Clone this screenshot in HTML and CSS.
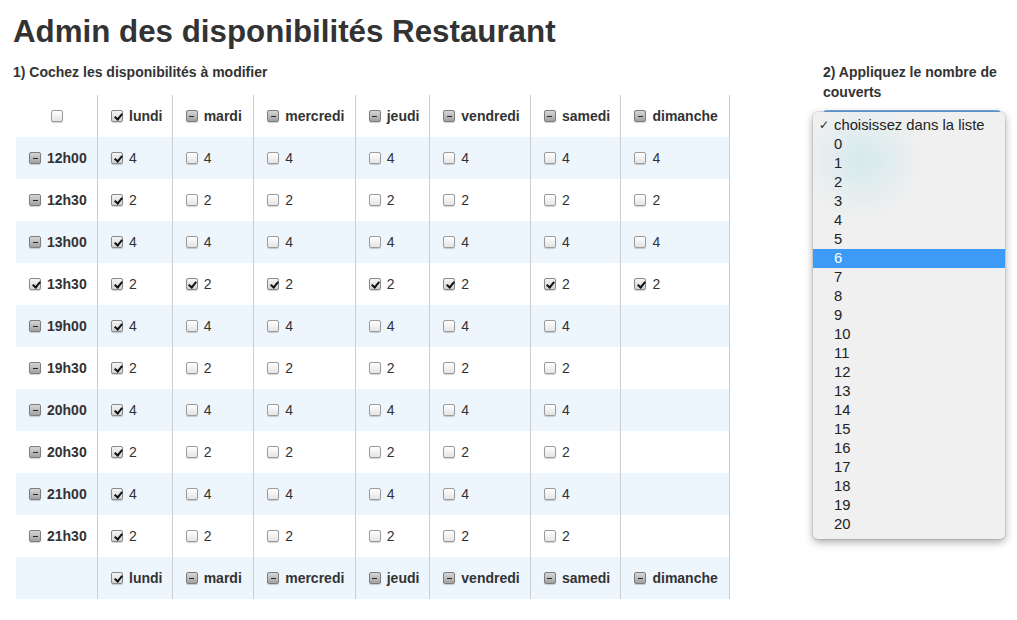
FILE: index.html
```html
<!DOCTYPE html>
<html lang="fr">
<head>
<meta charset="utf-8">
<title>Admin des disponibilités Restaurant</title>
<link rel="stylesheet" href="styles.css">
</head>
<body>
<div class="page">
  <h1 class="title">Admin des disponibilités Restaurant</h1>
  <div class="layout">
    <div class="left">
      <p class="step">1) Cochez les disponibilités à modifier</p>
      <table class="grid">
        <thead>
          <tr>
            <th class="corner"><span class="cb"></span></th>
            <th><span class="cb on"></span>lundi</th>
            <th><span class="cb mixed"></span>mardi</th>
            <th><span class="cb mixed"></span>mercredi</th>
            <th><span class="cb mixed"></span>jeudi</th>
            <th><span class="cb mixed"></span>vendredi</th>
            <th><span class="cb mixed"></span>samedi</th>
            <th><span class="cb mixed"></span>dimanche</th>
          </tr>
        </thead>
        <tbody>
          <tr class="alt">
            <th class="hour"><span class="cb mixed"></span>12h00</th>
            <td><span class="cb on"></span>4</td><td><span class="cb"></span>4</td><td><span class="cb"></span>4</td><td><span class="cb"></span>4</td><td><span class="cb"></span>4</td><td><span class="cb"></span>4</td><td><span class="cb"></span>4</td>
          </tr>
          <tr>
            <th class="hour"><span class="cb mixed"></span>12h30</th>
            <td><span class="cb on"></span>2</td><td><span class="cb"></span>2</td><td><span class="cb"></span>2</td><td><span class="cb"></span>2</td><td><span class="cb"></span>2</td><td><span class="cb"></span>2</td><td><span class="cb"></span>2</td>
          </tr>
          <tr class="alt">
            <th class="hour"><span class="cb mixed"></span>13h00</th>
            <td><span class="cb on"></span>4</td><td><span class="cb"></span>4</td><td><span class="cb"></span>4</td><td><span class="cb"></span>4</td><td><span class="cb"></span>4</td><td><span class="cb"></span>4</td><td><span class="cb"></span>4</td>
          </tr>
          <tr>
            <th class="hour"><span class="cb on"></span>13h30</th>
            <td><span class="cb on"></span>2</td><td><span class="cb on"></span>2</td><td><span class="cb on"></span>2</td><td><span class="cb on"></span>2</td><td><span class="cb on"></span>2</td><td><span class="cb on"></span>2</td><td><span class="cb on"></span>2</td>
          </tr>
          <tr class="alt">
            <th class="hour"><span class="cb mixed"></span>19h00</th>
            <td><span class="cb on"></span>4</td><td><span class="cb"></span>4</td><td><span class="cb"></span>4</td><td><span class="cb"></span>4</td><td><span class="cb"></span>4</td><td><span class="cb"></span>4</td><td></td>
          </tr>
          <tr>
            <th class="hour"><span class="cb mixed"></span>19h30</th>
            <td><span class="cb on"></span>2</td><td><span class="cb"></span>2</td><td><span class="cb"></span>2</td><td><span class="cb"></span>2</td><td><span class="cb"></span>2</td><td><span class="cb"></span>2</td><td></td>
          </tr>
          <tr class="alt">
            <th class="hour"><span class="cb mixed"></span>20h00</th>
            <td><span class="cb on"></span>4</td><td><span class="cb"></span>4</td><td><span class="cb"></span>4</td><td><span class="cb"></span>4</td><td><span class="cb"></span>4</td><td><span class="cb"></span>4</td><td></td>
          </tr>
          <tr>
            <th class="hour"><span class="cb mixed"></span>20h30</th>
            <td><span class="cb on"></span>2</td><td><span class="cb"></span>2</td><td><span class="cb"></span>2</td><td><span class="cb"></span>2</td><td><span class="cb"></span>2</td><td><span class="cb"></span>2</td><td></td>
          </tr>
          <tr class="alt">
            <th class="hour"><span class="cb mixed"></span>21h00</th>
            <td><span class="cb on"></span>4</td><td><span class="cb"></span>4</td><td><span class="cb"></span>4</td><td><span class="cb"></span>4</td><td><span class="cb"></span>4</td><td><span class="cb"></span>4</td><td></td>
          </tr>
          <tr>
            <th class="hour"><span class="cb mixed"></span>21h30</th>
            <td><span class="cb on"></span>2</td><td><span class="cb"></span>2</td><td><span class="cb"></span>2</td><td><span class="cb"></span>2</td><td><span class="cb"></span>2</td><td><span class="cb"></span>2</td><td></td>
          </tr>
        </tbody>
        <tfoot>
          <tr class="alt">
            <th class="corner"></th>
            <th><span class="cb on"></span>lundi</th>
            <th><span class="cb mixed"></span>mardi</th>
            <th><span class="cb mixed"></span>mercredi</th>
            <th><span class="cb mixed"></span>jeudi</th>
            <th><span class="cb mixed"></span>vendredi</th>
            <th><span class="cb mixed"></span>samedi</th>
            <th><span class="cb mixed"></span>dimanche</th>
          </tr>
        </tfoot>
      </table>
    </div>
    <div class="right">
      <p class="step">2) Appliquez le nombre de couverts</p>
      <div class="select-wrap">
        <div class="select-box"></div>
        <ul class="popup">
          <li class="opt sel">choisissez dans la liste</li>
          <li class="opt">0</li>
          <li class="opt">1</li>
          <li class="opt">2</li>
          <li class="opt">3</li>
          <li class="opt">4</li>
          <li class="opt">5</li>
          <li class="opt hl">6</li>
          <li class="opt">7</li>
          <li class="opt">8</li>
          <li class="opt">9</li>
          <li class="opt">10</li>
          <li class="opt">11</li>
          <li class="opt">12</li>
          <li class="opt">13</li>
          <li class="opt">14</li>
          <li class="opt">15</li>
          <li class="opt">16</li>
          <li class="opt">17</li>
          <li class="opt">18</li>
          <li class="opt">19</li>
          <li class="opt">20</li>
        </ul>
      </div>
    </div>
  </div>
</div>
</body>
</html>
```

FILE: styles.css
```css
* { box-sizing: border-box; }
html, body { margin: 0; padding: 0; background: #fff; }
body {
  font-family: "Liberation Sans", Arial, Helvetica, sans-serif;
  color: #333;
  font-size: 14px;
}
.page { padding: 12px 13px 0 13px; }
.title {
  margin: 0;
  font-size: 31.3px;
  line-height: 40px;
  font-weight: bold;
  color: #333;
}
.layout {
  display: flex;
  align-items: flex-start;
  margin-top: 10px;
}
.left { width: 717px; flex-shrink: 0; }
.right { margin-left: 93px; width: 180px; flex-shrink: 0; }
.step {
  margin: 0;
  font-size: 14px;
  font-weight: bold;
  line-height: 20px;
}
.left .step { margin-bottom: 13px; }

.grid {
  border-collapse: collapse;
  margin-left: 3px;
  table-layout: fixed;
}
.grid th, .grid td {
  height: 42px;
  padding: 0 0 0 12px;
  text-align: left;
  white-space: nowrap;
  vertical-align: middle;
  line-height: 20px;
  font-size: 14px;
  border-left: 1px solid #cdcdcd;
}
.grid th { font-weight: bold; }
.grid td { font-weight: normal; }
.grid th:first-child { border-left: none; border-right: none; }
.grid tr > *:last-child { border-right: 1px solid #cdcdcd; }
.grid th.corner { text-align: center; padding: 0; }
.grid tr.alt > * { background: #edf5fd; }

.grid tr > *:nth-child(1) { width: 82px; }
.grid tr > *:nth-child(2) { width: 75px; }
.grid tr > *:nth-child(3) { width: 82px; }
.grid tr > *:nth-child(4) { width: 102px; }
.grid tr > *:nth-child(5) { width: 75px; }
.grid tr > *:nth-child(6) { width: 101px; }
.grid tr > *:nth-child(7) { width: 91px; }
.grid tr > *:nth-child(8) { width: 109px; }

.cb {
  display: inline-block;
  position: relative;
  width: 12px;
  height: 12px;
  margin: 0 6px 0 1px;
  vertical-align: -1px;
  border: 1px solid #9c9c9c;
  border-radius: 2px;
  background: linear-gradient(#ffffff, #e4e4e4);
  box-shadow: 0 1px 1px rgba(0,0,0,0.18);
}
.corner .cb { margin: 0; }
.cb.on {
  background: linear-gradient(#f6f6f6, #d2d2d2);
  border-color: #8a8a8a;
}
.cb.on::after {
  content: "";
  position: absolute;
  left: 3.5px;
  top: 0.5px;
  width: 3px;
  height: 6px;
  border-right: 2px solid #111;
  border-bottom: 2px solid #111;
  transform: rotate(40deg);
}
.cb.mixed {
  background: linear-gradient(#d6d6d6, #a2a2a2);
  border-color: #7e7e7e;
}
.cb.mixed::after {
  content: "";
  position: absolute;
  left: 2.5px;
  top: 4.5px;
  width: 5px;
  height: 1.5px;
  background: #2a2a2a;
}

.select-wrap {
  position: relative;
  margin-top: 8px;
  height: 22px;
}
.select-box {
  height: 22px;
  width: 178px;
  border: 2px solid #6fa9e8;
  border-radius: 4px;
  background: #fff;
}
.popup {
  position: absolute;
  left: -10px;
  top: 2px;
  width: 192px;
  margin: 0;
  padding: 4px 0 5px 0;
  list-style: none;
  background:
    radial-gradient(circle at 50px 48px, rgba(205,232,236,0.75), rgba(240,240,240,0) 60px),
    #f0f0f0;
  border-radius: 5px;
  box-shadow: 0 3px 9px rgba(0,0,0,0.35), 0 0 0 1px rgba(0,0,0,0.08);
}
.opt {
  height: 19px;
  line-height: 19px;
  padding-left: 21px;
  font-size: 14.8px;
  color: #222;
  position: relative;
}
.opt.sel::before {
  content: "✓";
  position: absolute;
  left: 6px;
  top: 0;
  font-family: "DejaVu Sans", sans-serif;
  font-size: 12px;
}
.opt.hl { background: #3d9bf7; color: #fff; }
```
